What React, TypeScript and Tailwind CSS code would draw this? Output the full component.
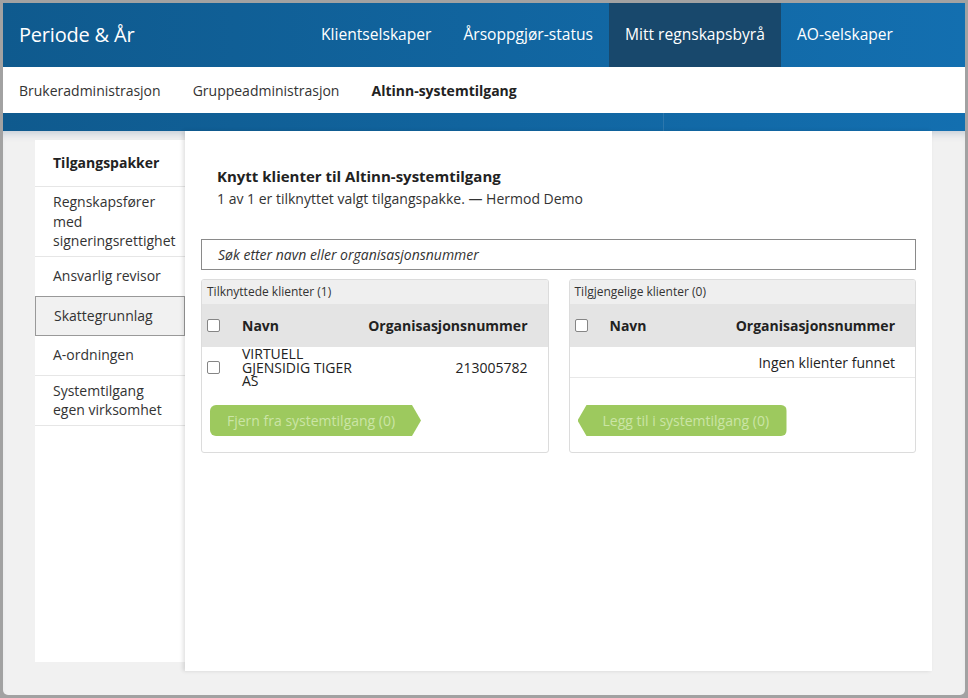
import React from 'react'

const topTabs = ['Klientselskaper', 'Årsoppgjør-status', 'Mitt regnskapsbyrå', 'AO-selskaper']
const subTabs = ['Brukeradministrasjon', 'Gruppeadministrasjon', 'Altinn-systemtilgang']

const sideItems = [
  { label: 'Regnskapsfører med signeringsrettighet' },
  { label: 'Ansvarlig revisor' },
  { label: 'Skattegrunnlag', active: true },
  { label: 'A-ordningen' },
  { label: 'Systemtilgang egen virksomhet' },
]

function Checkbox() {
  return <span className="block w-[13px] h-[13px] rounded-[2px] border border-[#858585] bg-white" />
}

function ClientCard({ title, children, button, dir }: { title: string; children: React.ReactNode; button: string; dir: 'left' | 'right' }) {
  return (
    <div className="flex-1 rounded-[3px] border border-[#dcdcdc] bg-white h-[174px] overflow-hidden">
      <div className="h-[24px] bg-[#efefef] px-[5px] flex items-center text-[12px] text-[#333]">{title}</div>
      <div className="h-[43px] bg-[#e4e4e4] flex items-center pl-[5px] pr-[20px] text-[14px] font-bold text-[#222]">
        <Checkbox />
        <span className="ml-[22px]">Navn</span>
        <span className="ml-auto">Organisasjonsnummer</span>
      </div>
      {children}
      <div className={dir === 'right' ? 'pl-[8px] pt-[17px]' : 'pl-[8px] pt-[27px]'}>
        {dir === 'right' ? (
          <div className="inline-flex items-center h-[31px] w-[211px] pl-[17px] bg-[#9dc95e] text-[14px] text-[#cbe5a6] rounded-l-[6px] [clip-path:polygon(0_0,calc(100%-9px)_0,100%_50%,calc(100%-9px)_100%,0_100%)]">
            {button}
          </div>
        ) : (
          <div className="inline-flex items-center h-[31px] w-[209px] pl-[25px] bg-[#9dc95e] text-[14px] text-[#cbe5a6] rounded-r-[6px] [clip-path:polygon(9px_0,100%_0,100%_100%,9px_100%,0_50%)]">
            {button}
          </div>
        )}
      </div>
    </div>
  )
}

export default function App() {
  return (
    <div className="w-[968px] h-[698px] bg-[#a2a2a2] p-[3px] font-['Open_Sans',sans-serif]">
      <div className="w-full h-full bg-[#f1f1f1] rounded-b-[5px] flex flex-col overflow-hidden">
        {/* Top bar */}
        <div className="h-[64px] flex items-stretch bg-gradient-to-r from-[#0f5a8e] to-[#136fb0] text-white">
          <div className="pl-[16px] flex items-center text-[20px] tracking-[-0.2px]">Periode &amp; År</div>
          <nav className="ml-auto mr-[56px] flex items-stretch text-[15.6px]">
            {topTabs.map(t => (
              <div key={t} className={`px-[16px] flex items-center ${t === 'Mitt regnskapsbyrå' ? 'bg-[#18486c]' : ''}`}>{t}</div>
            ))}
          </nav>
        </div>

        {/* Sub nav */}
        <div className="h-[46px] bg-white flex items-center pl-[16px] gap-[32px] text-[14px] text-[#333]">
          {subTabs.map(t => (
            <span key={t} className={t === 'Altinn-systemtilgang' ? 'font-bold text-[#222]' : ''}>{t}</span>
          ))}
        </div>

        {/* Blue strip */}
        <div className="h-[18px] flex bg-gradient-to-r from-[#0f5a8e] to-[#136fb0]">
          <div className="w-[661px] border-r border-[#2c77ad]" />
        </div>

        {/* Main */}
        <div className="flex-1 flex items-start pl-[32px] pr-[33px] shadow-[inset_0_8px_8px_-6px_rgba(40,80,120,0.25)]">
          {/* Sidebar */}
          <aside className="w-[150px] mt-[9px] h-[522px] bg-white text-[14px] text-[#333] leading-[19.5px]">
            <div className="h-[47px] pl-[18px] flex items-center font-bold text-[#222] border-b border-[#e6e6e6]">Tilgangspakker</div>
            {sideItems.map(it => (
              <div
                key={it.label}
                className={`min-h-[40px] py-[5px] pl-[18px] pr-[6px] flex items-center border-b ${it.active ? 'bg-[#f1f1f1] border border-[#999] -mt-px' : 'border-[#e6e6e6]'}`}
              >
                {it.label}
              </div>
            ))}
          </aside>

          {/* Content */}
          <main className="flex-1 h-[540px] bg-white shadow-[-2px_0_4px_rgba(0,0,0,0.12)] px-[16px] pt-[35px] text-[#222]">
            <div className="pl-[16px]">
              <h1 className="text-[15px] font-bold leading-[20px]">Knytt klienter til Altinn-systemtilgang</h1>
              <p className="text-[14px] leading-[20px] mt-[3px] text-[#333]">1 av 1 er tilknyttet valgt tilgangspakke. — Hermod Demo</p>
            </div>

            <div className="mt-[30px] h-[31px] border border-[#8a8a8a] flex items-center pl-[16px] text-[14px] italic text-[#333]">
              Søk etter navn eller organisasjonsnummer
            </div>

            <div className="mt-[9px] flex gap-[20px]">
              <ClientCard title="Tilknyttede klienter (1)" button="Fjern fra systemtilgang (0)" dir="right">
                <div className="h-[41px] flex items-center pl-[5px] pr-[20px] text-[14px] text-[#222]">
                  <Checkbox />
                  <span className="ml-[22px] leading-[13.5px] w-[120px]">VIRTUELL GJENSIDIG TIGER AS</span>
                  <span className="ml-auto">213005782</span>
                </div>
              </ClientCard>
              <ClientCard title="Tilgjengelige klienter (0)" button="Legg til i systemtilgang (0)" dir="left">
                <div className="h-[31px] flex items-center justify-end pr-[20px] text-[14px] text-[#222] border-b border-[#e8e8e8]">
                  Ingen klienter funnet
                </div>
              </ClientCard>
            </div>
          </main>
        </div>
      </div>
    </div>
  )
}
